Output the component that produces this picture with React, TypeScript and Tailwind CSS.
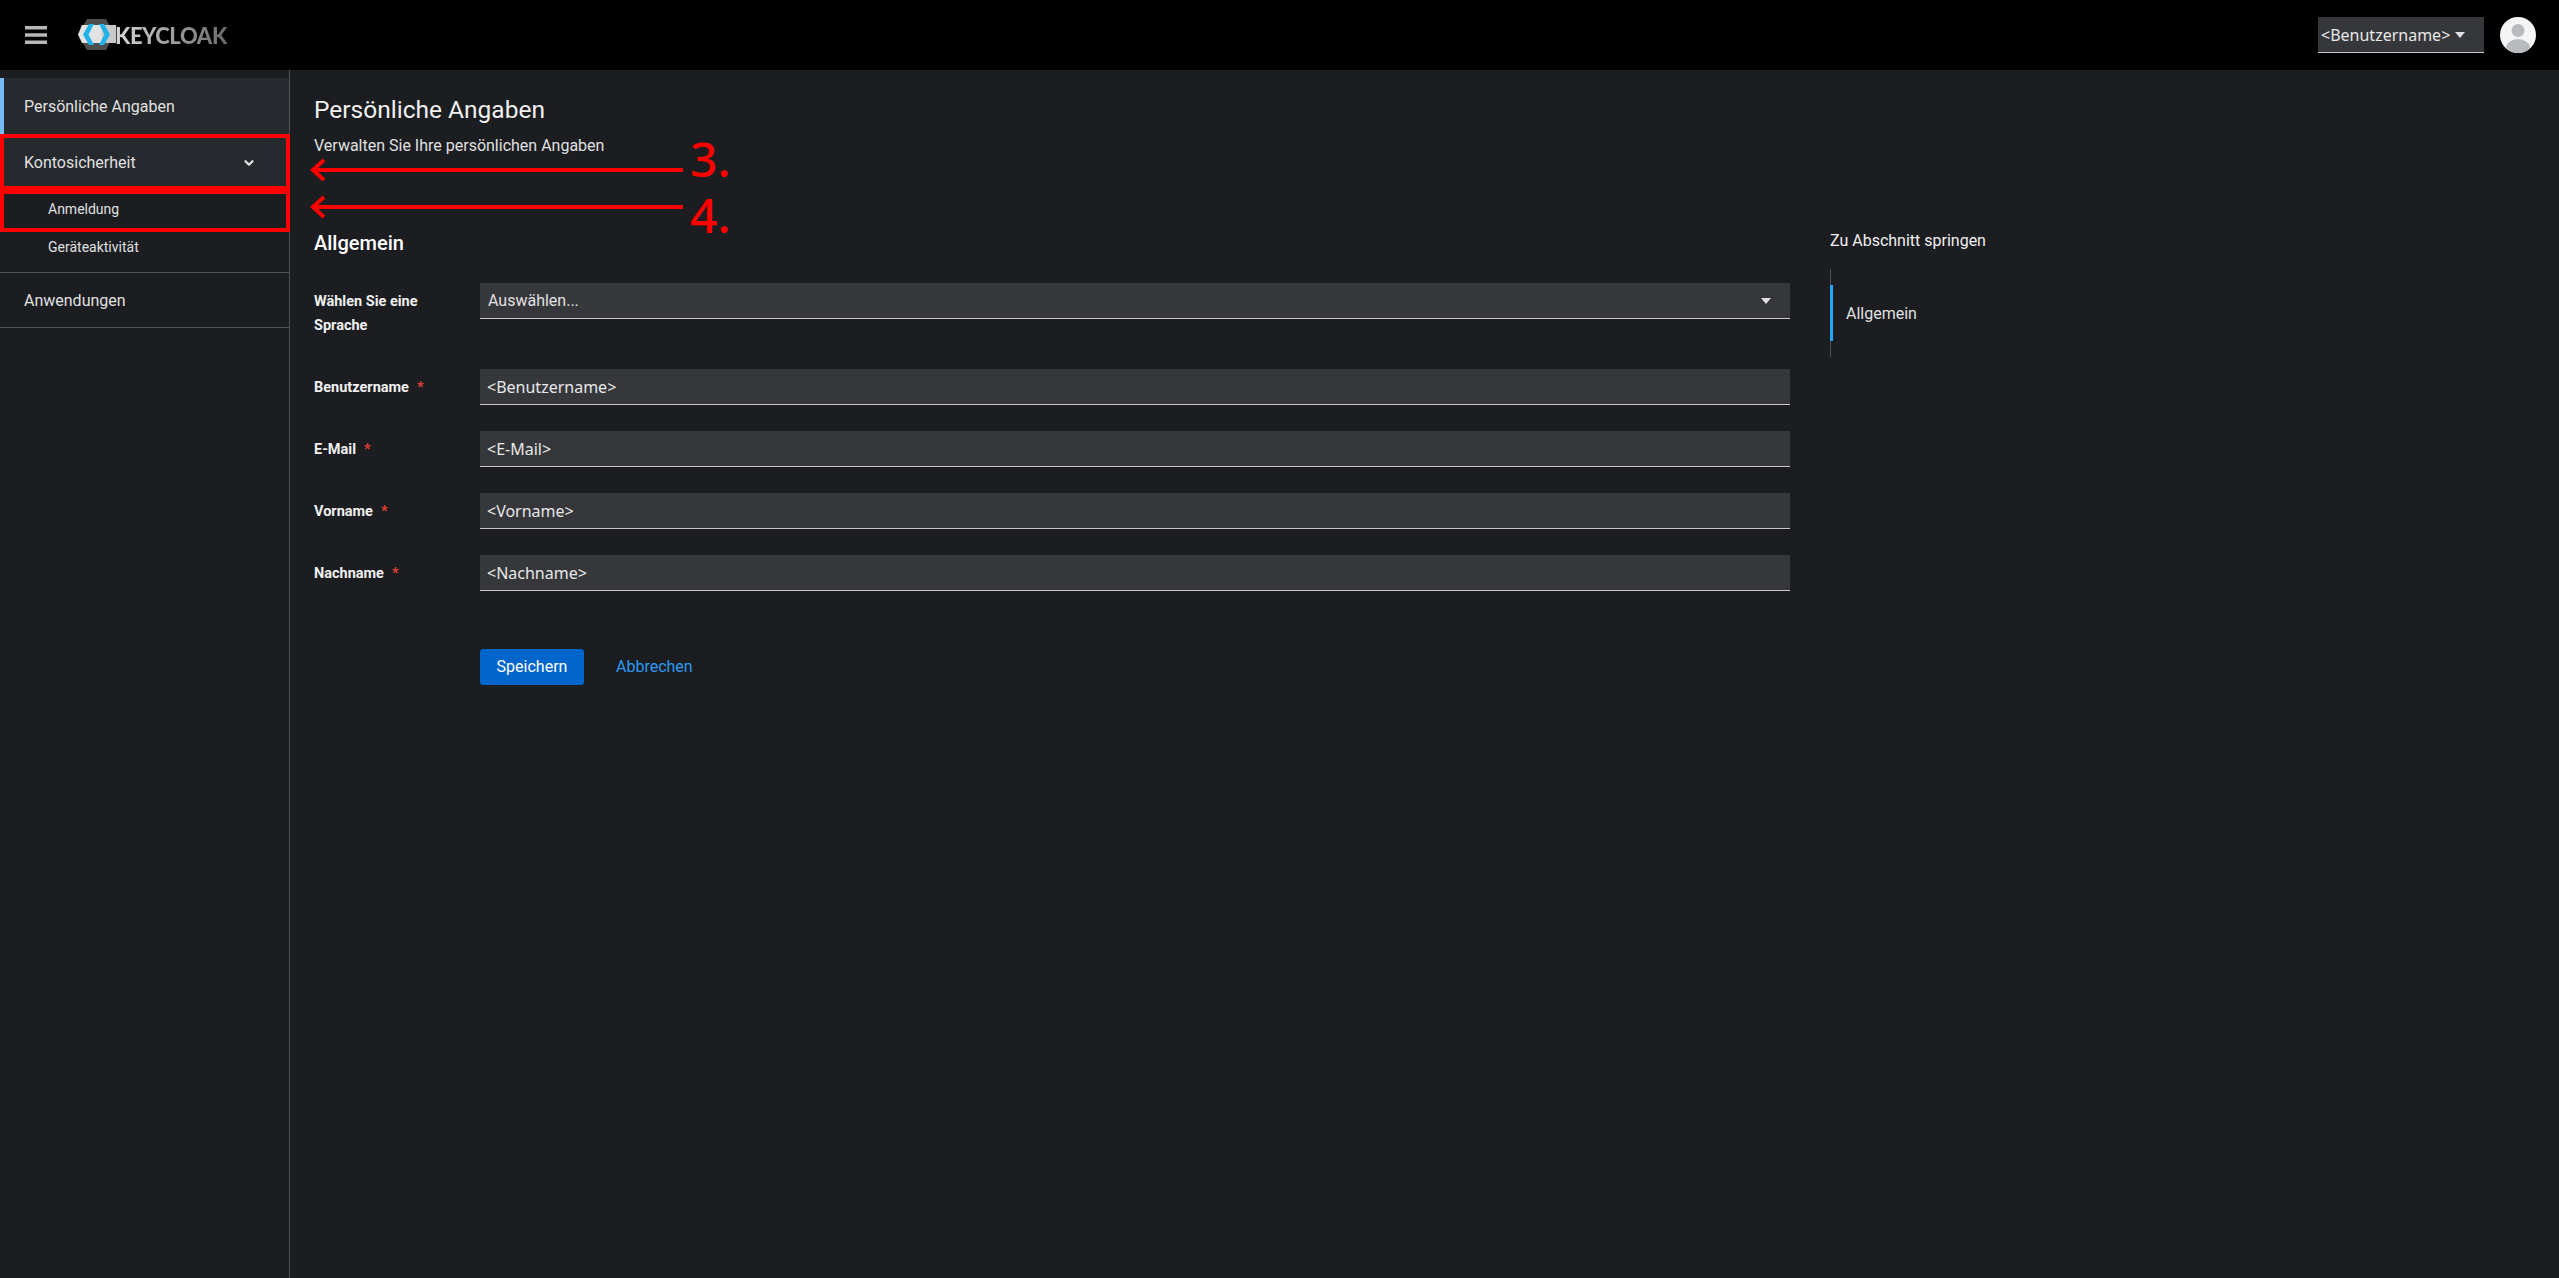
import { ChevronDown } from "lucide-react";

const display = "font-['Roboto','Liberation_Sans',sans-serif]";

function Logo() {
  return (
    <svg width="38" height="32" viewBox="0 0 38 32" className="shrink-0">
      <polygon points="9,0 28,0 36,15.5 28,31 9,31 0,15.5" fill="#4d4d4d" />
      <polygon points="4,6 38,6 38,24 4,24 0,15.5" fill="#e2e2e2" />
      <polygon points="24,6 38,6 38,24 24,24" fill="#c9c9c9" />
      <polygon points="11,5 16,5 10.5,15.5 16,26 11,26 5,15.5" fill="#1fb2e8" />
      <polygon points="21,5 26,5 32,15.5 26,26 21,26 26.5,15.5" fill="#1fb2e8" />
    </svg>
  );
}

function Avatar() {
  return (
    <svg width="36" height="36" viewBox="0 0 36 36">
      <defs>
        <clipPath id="avatar-clip">
          <circle cx="18" cy="18" r="18" />
        </clipPath>
      </defs>
      <circle cx="18" cy="18" r="18" fill="#f5f5f5" />
      <g clipPath="url(#avatar-clip)" fill="#b8bbbe">
        <circle cx="18" cy="13.5" r="6.5" />
        <ellipse cx="18" cy="31" rx="12" ry="9" />
      </g>
    </svg>
  );
}

function Caret() {
  return (
    <svg width="10" height="6" viewBox="0 0 10 6">
      <polygon points="0,0 10,0 5,6" fill="#e0e0e0" />
    </svg>
  );
}

function Field({ label, value }: { label: string; value: string }) {
  return (
    <>
      <label className="pt-[7px] text-[14.5px] leading-[24px] font-bold text-[#f0f0f0]">
        {label}
        <span className="ml-[8px] text-[#e0413a]">*</span>
      </label>
      <input
        readOnly
        defaultValue={value}
        className="h-[36px] w-full border-b border-[#c7c7c7] bg-[#36373b] px-[7px] text-[16px] text-[#e8e8e8] outline-none font-['Noto_Sans',sans-serif]"
      />
    </>
  );
}

export default function App() {
  return (
    <div className={`relative flex h-screen min-h-[1278px] flex-col bg-[#1b1d21] text-[#e0e0e0] ${display}`}>
      <header className="flex h-[70px] shrink-0 items-center bg-black pl-[25px] pr-[23px]">
        <svg width="22" height="18" viewBox="0 0 22 18" className="shrink-0">
          <path d="M0 0h22v3.5H0zM0 7.2h22v3.5H0zM0 14.5h22V18H0z" fill="#b8b8b8" />
        </svg>
        <div className="ml-[31px] flex items-center">
          <Logo />
          <span className="ml-[-1px] bg-gradient-to-r from-[#d8d8d8] to-[#6a6a6a] bg-clip-text text-[22px] font-black tracking-[-0.4px] text-transparent font-['Lato',sans-serif]">
            KEYCLOAK
          </span>
        </div>
        <div className="ml-auto flex items-center gap-[16px]">
          <button className="flex h-[36px] w-[166px] items-center gap-[5px] border-b border-[#c7c7c7] bg-[#36373b] pl-[3px] text-[16px] text-[#e8e8e8] font-['Noto_Sans',sans-serif]">
            {"<Benutzername>"}
            <Caret />
          </button>
          <Avatar />
        </div>
      </header>

      <div className="flex flex-1">
        <nav className="w-[290px] shrink-0 border-r border-[#4f5255] pt-[8px]">
          <a className="flex h-[56px] items-center border-l-4 border-[#73bcf7] bg-[#26292d] pl-[20px] pt-[1px] text-[16px]">
            Persönliche Angaben
          </a>
          <a className="flex h-[56px] items-center justify-between bg-[#26292d] pl-[24px] pr-[33px] pt-[1px] text-[16px]">
            Kontosicherheit
            <ChevronDown size={14} strokeWidth={4} />
          </a>
          <div className="pb-[7px]">
            <a className="flex h-[38px] items-center pl-[48px] text-[14px]">Anmeldung</a>
            <a className="flex h-[37px] items-center pl-[48px] pt-[1px] text-[14px]">Geräteaktivität</a>
          </div>
          <a className="flex h-[56px] items-center border-y border-[#4f5255] pl-[24px] pt-[1px] text-[16px]">Anwendungen</a>
        </nav>

        <main className="flex flex-1 gap-[40px] pl-[24px]">
          <div className="w-[1476px]">
            <h1 className="pt-[22px] text-[24.5px] leading-[36px] text-[#f0f0f0]">Persönliche Angaben</h1>
            <p className="mt-[6px] text-[16px] leading-[24px]">Verwalten Sie Ihre persönlichen Angaben</p>
            <h2 className="mt-[70px] text-[20px] font-medium leading-[30px] text-white">Allgemein</h2>
            <form className="mt-[25px] grid grid-cols-[166px_1310px] gap-y-[26px]">
              <label className="pb-[5px] pt-[7px] text-[14.5px] font-bold leading-[24px] text-[#f0f0f0]">
                Wählen Sie eine
                <br />
                Sprache
              </label>
              <div className="flex h-[36px] items-center justify-between border-b border-[#c7c7c7] bg-[#36373b] pl-2 pr-[19px] pt-[1px] text-[16px]">
                Auswählen...
                <Caret />
              </div>
              <Field label="Benutzername" value="<Benutzername>" />
              <Field label="E-Mail" value="<E-Mail>" />
              <Field label="Vorname" value="<Vorname>" />
              <Field label="Nachname" value="<Nachname>" />
            </form>
            <div className="ml-[166px] mt-[58px] flex items-center gap-[32px] text-[16px]">
              <button className="h-[36px] w-[104px] rounded-[3px] bg-[#0066cc] text-white">Speichern</button>
              <a className="text-[#2b9af3]">Abbrechen</a>
            </div>
          </div>
          <aside className="pt-[159px]">
            <div className="text-[16px] leading-[24px] text-[#f0f0f0]">Zu Abschnitt springen</div>
            <div className="mt-[16px] flex h-[88px] items-center border-l border-[#4f5255]">
              <div className="ml-[-1px] flex h-[56px] items-center border-l-[3px] border-[#1fa7f8] pl-[13px] pt-[1px] text-[16px]">
                Allgemein
              </div>
            </div>
          </aside>
        </main>
      </div>

      {/* annotations on top of the screenshot */}
      <div className="absolute left-0 top-[134px] h-[56px] w-[290px] border-4 border-[#ff0000]" />
      <div className="absolute left-0 top-[190px] h-[42px] w-[290px] border-4 border-[#ff0000]" />
      <svg width="374" height="24" viewBox="0 0 374 24" className="absolute left-[310px] top-[158px]">
        <path d="M373 12 H3 M14 2 L3 12 L14 22" fill="none" stroke="#ff0000" strokeWidth="4" />
      </svg>
      <svg width="374" height="24" viewBox="0 0 374 24" className="absolute left-[310px] top-[195px]">
        <path d="M373 12 H3 M14 2 L3 12 L14 22" fill="none" stroke="#ff0000" strokeWidth="4" />
      </svg>
      <span className="absolute left-[690px] top-[135px] text-[48px] font-medium leading-[48px] text-[#ff0000] font-['Noto_Sans',sans-serif]">
        3.
      </span>
      <span className="absolute left-[690px] top-[191px] text-[48px] font-medium leading-[48px] text-[#ff0000] font-['Noto_Sans',sans-serif]">
        4.
      </span>
    </div>
  );
}
